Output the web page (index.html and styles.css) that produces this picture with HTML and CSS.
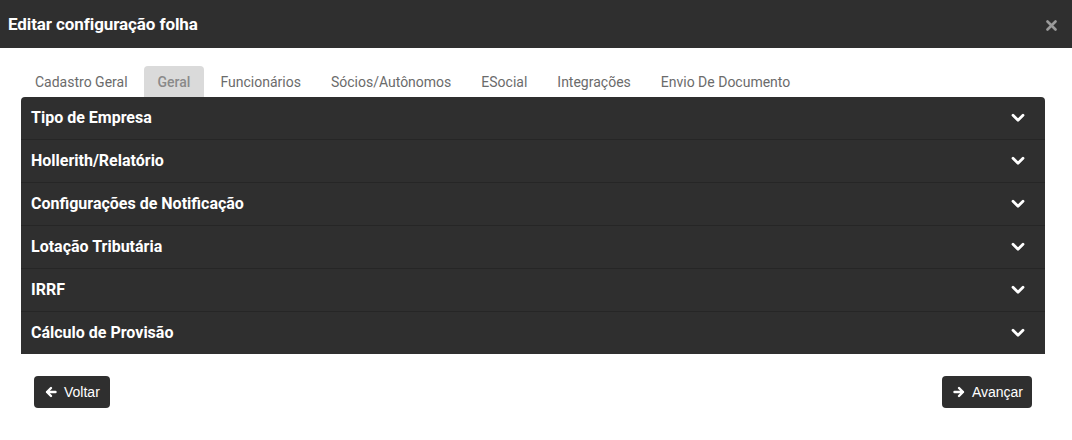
FILE: index.html
```html
<!DOCTYPE html>
<html lang="pt">
<head>
<meta charset="utf-8">
<link rel="stylesheet" href="styles.css">
</head>
<body>
<div class="modal">
  <div class="modal-header">
    <h1 class="modal-title">Editar configuração folha</h1>
    <span class="close">
      <svg width="11" height="11" viewBox="0 0 11 11"><path d="M1.5 1.5L9.5 9.5M9.5 1.5L1.5 9.5" stroke="#9a9a9a" stroke-width="2.6" stroke-linecap="round"/></svg>
    </span>
  </div>
  <div class="modal-body">
    <ul class="tabs">
      <li class="tab">Cadastro Geral</li>
      <li class="tab active">Geral</li>
      <li class="tab">Funcionários</li>
      <li class="tab">Sócios/Autônomos</li>
      <li class="tab">ESocial</li>
      <li class="tab">Integrações</li>
      <li class="tab">Envio De Documento</li>
    </ul>
    <div class="accordion">
      <div class="acc-row"><span>Tipo de Empresa</span><svg class="chev" viewBox="0 0 14 10"><path d="M2 2.2L7 7.2L12 2.2" fill="none" stroke="#fff" stroke-width="2.8" stroke-linecap="round" stroke-linejoin="round"/></svg></div>
      <div class="acc-row"><span>Hollerith/Relatório</span><svg class="chev" viewBox="0 0 14 10"><path d="M2 2.2L7 7.2L12 2.2" fill="none" stroke="#fff" stroke-width="2.8" stroke-linecap="round" stroke-linejoin="round"/></svg></div>
      <div class="acc-row"><span>Configurações de Notificação</span><svg class="chev" viewBox="0 0 14 10"><path d="M2 2.2L7 7.2L12 2.2" fill="none" stroke="#fff" stroke-width="2.8" stroke-linecap="round" stroke-linejoin="round"/></svg></div>
      <div class="acc-row"><span>Lotação Tributária</span><svg class="chev" viewBox="0 0 14 10"><path d="M2 2.2L7 7.2L12 2.2" fill="none" stroke="#fff" stroke-width="2.8" stroke-linecap="round" stroke-linejoin="round"/></svg></div>
      <div class="acc-row"><span>IRRF</span><svg class="chev" viewBox="0 0 14 10"><path d="M2 2.2L7 7.2L12 2.2" fill="none" stroke="#fff" stroke-width="2.8" stroke-linecap="round" stroke-linejoin="round"/></svg></div>
      <div class="acc-row"><span>Cálculo de Provisão</span><svg class="chev" viewBox="0 0 14 10"><path d="M2 2.2L7 7.2L12 2.2" fill="none" stroke="#fff" stroke-width="2.8" stroke-linecap="round" stroke-linejoin="round"/></svg></div>
    </div>
    <div class="actions">
      <button class="btn"><svg class="arrow" viewBox="0 0 12 12"><path d="M10.5 6H2M6 2L2 6L6 10" fill="none" stroke="#fff" stroke-width="2.4" stroke-linecap="round" stroke-linejoin="round"/></svg>Voltar</button>
      <button class="btn"><svg class="arrow" viewBox="0 0 12 12"><path d="M1.5 6H10M6 2L10 6L6 10" fill="none" stroke="#fff" stroke-width="2.4" stroke-linecap="round" stroke-linejoin="round"/></svg>Avançar</button>
    </div>
  </div>
</div>
</body>
</html>
```
FILE: styles.css
```css
* { box-sizing: border-box; }
html, body { margin: 0; padding: 0; background: #fff; }
body { width: 1072px; height: 440px; overflow: hidden; font-family: Roboto, "Liberation Sans", sans-serif; }

.modal-header {
  height: 48px;
  background: #2f2f2f;
  display: flex;
  align-items: center;
  justify-content: space-between;
  padding: 0 15px 0 8px;
}
.modal-title {
  margin: 0;
  color: #fff;
  font-size: 17px;
  font-weight: 700;
  letter-spacing: -0.1px;
}
.close { display: flex; align-items: center; padding-top: 2px; }

.modal-body { padding: 18px 27px 0 21px; }

.tabs {
  list-style: none;
  margin: 0 0 0 -1px;
  padding: 0;
  display: flex;
  height: 31px;
}
.tab {
  padding: 0 15px;
  font-size: 14px;
  color: #6b6b6b;
  line-height: 32px;
  border-radius: 4px 4px 0 0;
}
.tab.active {
  background: #dadada;
  color: #8a8a8a;
  font-weight: 500;
  padding: 0 14px;
  margin: 0 1px 0 1px;
}

.accordion {
  background: #2f2f2f;
  border-radius: 4px 4px 0 0;
  overflow: hidden;
}
.acc-row {
  height: 43px;
  display: flex;
  align-items: center;
  justify-content: space-between;
  padding: 0 20px 0 10px;
  color: #fff;
  font-size: 16px;
  font-weight: 700;
  border-top: 1px solid #262626;
}
.acc-row:first-child { border-top: none; height: 42px; }
.acc-row span { padding-bottom: 1px; }
.chev { width: 14px; height: 10px; }

.actions {
  display: flex;
  justify-content: space-between;
  padding: 22px 13px 0 13px;
}
.btn {
  height: 32px;
  border: none;
  border-radius: 4px;
  background: #2f2f2f;
  color: #fff;
  font-family: "Liberation Sans", Arial, sans-serif;
  font-size: 14px;
  padding: 0 10px 0 11px;
  display: flex;
  align-items: center;
  gap: 7px;
}
.btn:last-child { padding: 0 9px 0 11px; }
.arrow { width: 12px; height: 12px; }
```
